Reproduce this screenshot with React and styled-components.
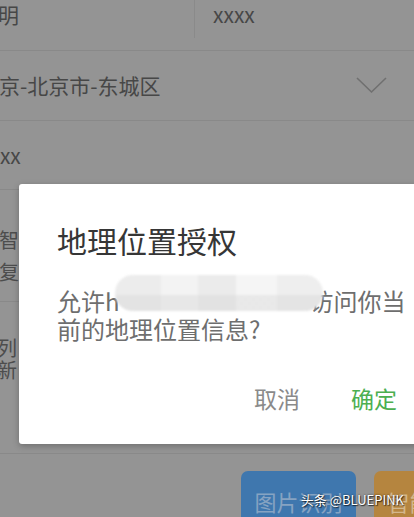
import React from 'react';
import styled, { createGlobalStyle } from 'styled-components';

const GlobalStyle = createGlobalStyle`
  html, body {
    margin: 0;
    padding: 0;
    background: #949494;
  }
  * {
    box-sizing: border-box;
  }
`;

const Screen = styled.div`
  position: relative;
  width: 414px;
  height: 517px;
  overflow: hidden;
  background: #949494;
  font-family: 'Noto Sans CJK SC', 'Noto Sans', sans-serif;
  color: #474747;
`;

const Row = styled.div`
  display: flex;
  align-items: ${(p) => p.$align || 'center'};
  height: ${(p) => p.$h}px;
  margin-top: ${(p) => p.$mt || 0}px;
  border-bottom: 1px solid #898989;
  font-size: 21px;
  line-height: 1;
`;

const Cell = styled.div`
  display: flex;
  align-items: center;
  width: ${(p) => (p.$w ? `${p.$w}px` : 'auto')};
  flex: ${(p) => (p.$w ? 'none' : 1)};
  height: 100%;
  padding-left: ${(p) => p.$pl || 0}px;
`;

const SplitCell = styled(Cell)`
  height: 62px;
  align-self: flex-start;
  padding-top: 14px;
  border-right: 1px solid #8a8a8a;
`;

const ValueCell = styled(Cell)`
  height: 62px;
  padding-top: 14px;
`;

const Text = styled.span`
  margin-left: ${(p) => -(p.$shift || 0)}px;
  white-space: nowrap;
`;

const Chevron = styled.svg`
  margin-left: auto;
  margin-right: 27px;
`;

const Label = styled.div`
  display: flex;
  flex-direction: column;
  gap: ${(p) => p.$gap}px;
  margin-left: ${(p) => -(p.$shift || 0)}px;
  padding-top: ${(p) => p.$pt || 0}px;
  font-size: 20px;
  letter-spacing: 6px;
  color: #4d4d4d;
`;

const Actions = styled.div`
  display: flex;
  gap: 18px;
  padding: 17px 0 0 241px;
`;

const ActionButton = styled.div`
  flex: none;
  width: 115px;
  height: 60px;
  border-radius: 7px;
  background: ${(p) => p.$bg};
  color: ${(p) => p.$fg};
  font-size: 22px;
  display: flex;
  justify-content: center;
  padding-top: 14px;
  white-space: nowrap;
  overflow: hidden;
`;

const Dialog = styled.div`
  position: absolute;
  left: 19px;
  top: 184px;
  width: 416px;
  height: 260px;
  padding: 38px 38px 0;
  background: #fff;
  border-radius: 3px;
  box-shadow: 0 2px 6px rgba(0, 0, 0, 0.25);
`;

const Title = styled.div`
  font-size: 30px;
  line-height: 36px;
  color: #363636;
`;

const Body = styled.div`
  position: relative;
  margin-top: 29px;
  font-size: 24px;
  line-height: 28px;
  color: #6e6e6e;
  white-space: nowrap;
`;

const Masked = styled.span`
  display: inline-block;
  width: 190px;
`;

const Blur = styled.div`
  position: absolute;
  left: 58px;
  top: -12px;
  width: 208px;
  height: 36px;
  border-radius: 18px;
  filter: blur(1.2px);
  background:
    linear-gradient(to bottom, rgba(255, 255, 255, 0) 55%, rgba(210, 210, 210, 0.35) 56%),
    linear-gradient(
      to right,
      #ececec 0 22%,
      #f3f3f3 22% 40%,
      #ebebeb 40% 58%,
      #f5f5f5 58% 78%,
      #eeeeee 78% 100%
    );
`;

const Buttons = styled.div`
  display: flex;
  justify-content: flex-end;
  gap: 51px;
  margin-top: 40px;
  font-size: 23px;
  line-height: 30px;
`;

const DialogButton = styled.span`
  color: ${(p) => p.$color};
`;

const Watermark = styled.div`
  position: absolute;
  right: 10px;
  bottom: 8px;
  font-family: 'Noto Sans CJK SC', 'Liberation Sans', sans-serif;
  font-size: 13px;
  color: #fff;
  text-shadow: 0 0 2px rgba(0, 0, 0, 0.7), 1px 1px 1px rgba(0, 0, 0, 0.6);
  white-space: nowrap;
`;

export default function App() {
  return (
    <Screen>
      <GlobalStyle />
      <Row $h={75} $mt={-24} $align="flex-start">
        <SplitCell $w={195}>
          <Text $shift={23}>说明</Text>
        </SplitCell>
        <ValueCell $pl={18}>
          <Text>xxxx</Text>
        </ValueCell>
      </Row>
      <Row $h={70}>
        <Cell>
          <Text $shift={22}>北京-北京市-东城区</Text>
          <Chevron width="31" height="17" viewBox="0 0 31 17">
            <polyline
              points="1,1 15.5,15 30,1"
              fill="none"
              stroke="#707070"
              strokeWidth="1.6"
            />
          </Chevron>
        </Cell>
      </Row>
      <Row $h={69}>
        <Cell>
          <Text $shift={21}>xxxx</Text>
        </Cell>
      </Row>
      <Row $h={112} $align="flex-start">
        <Label $gap={12} $shift={1} $pt={40}>
          <span>智能</span>
          <span>复制</span>
        </Label>
      </Row>
      <Row $h={152} $align="flex-start">
        <Label $gap={2} $shift={3} $pt={36}>
          <span>列表</span>
          <span>新增</span>
        </Label>
      </Row>
      <Actions>
        <ActionButton $bg="#3f77ae" $fg="#86a3c2">
          图片识别
        </ActionButton>
        <ActionButton $bg="#b5853f" $fg="#d3b78c">
          智能识别
        </ActionButton>
      </Actions>

      <Dialog>
        <Title>地理位置授权</Title>
        <Body>
          允许h<Masked />访问你当
          <br />
          前的地理位置信息?
          <Blur />
        </Body>
        <Buttons>
          <DialogButton $color="#8a8a8a">取消</DialogButton>
          <DialogButton $color="#4caf50">确定</DialogButton>
        </Buttons>
      </Dialog>

      <Watermark>头条 @BLUEPINK</Watermark>
    </Screen>
  );
}
